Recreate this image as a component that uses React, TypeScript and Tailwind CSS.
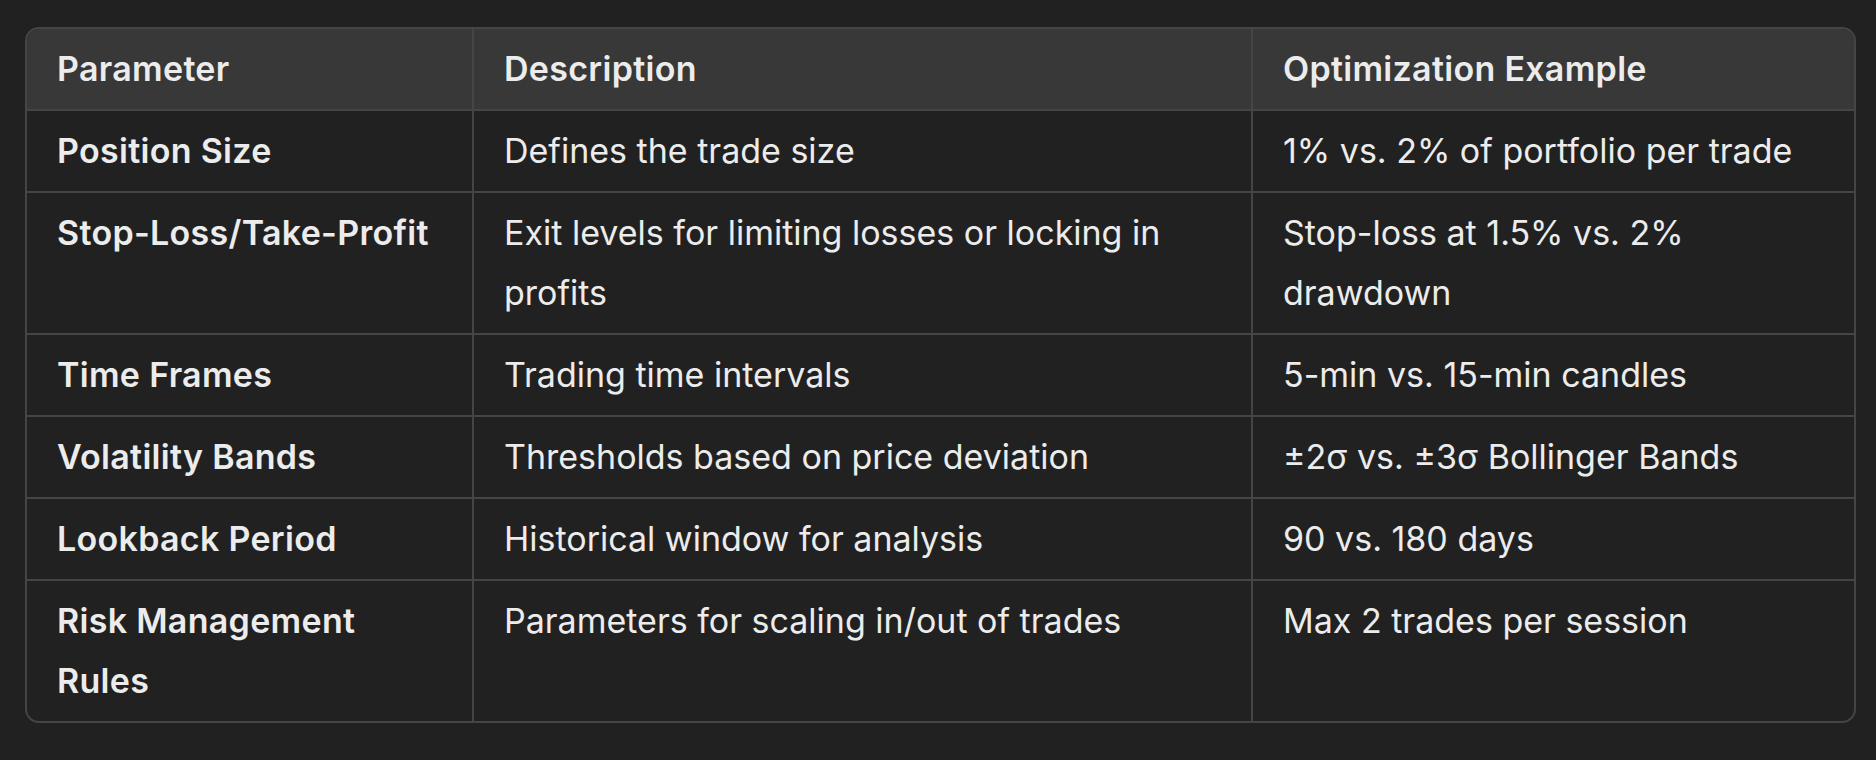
const rows = [
  {
    param: 'Position Size',
    desc: 'Defines the trade size',
    example: '1% vs. 2% of portfolio per trade',
  },
  {
    param: 'Stop-Loss/Take-Profit',
    desc: 'Exit levels for limiting losses or locking in profits',
    example: 'Stop-loss at 1.5% vs. 2% drawdown',
  },
  {
    param: 'Time Frames',
    desc: 'Trading time intervals',
    example: '5-min vs. 15-min candles',
  },
  {
    param: 'Volatility Bands',
    desc: 'Thresholds based on price deviation',
    example: '±2σ vs. ±3σ Bollinger Bands',
  },
  {
    param: 'Lookback Period',
    desc: 'Historical window for analysis',
    example: '90 vs. 180 days',
  },
  {
    param: 'Risk Management Rules',
    desc: 'Parameters for scaling in/out of trades',
    example: 'Max 2 trades per session',
  },
];

export default function App() {
  return (
    <div
      className="min-h-[760px] w-[1876px] bg-[#212121] pt-[27px] pl-[25px] text-[#ececec]"
      style={{ fontFamily: 'Inter, "Noto Sans", sans-serif' }}
    >
      <div className="w-[1831px] overflow-hidden rounded-[14px] border-2 border-[#454545]">
        <table className="w-full table-fixed border-collapse text-[34px] leading-[60px]">
          <colgroup>
            <col className="w-[446px]" />
            <col className="w-[779px]" />
            <col />
          </colgroup>
          <thead>
            <tr className="bg-[#383838]">
              <th className="border-r-2 border-b-2 border-[#454545] px-[30px] py-[10px] text-left font-semibold tracking-[0.3px]">
                Parameter
              </th>
              <th className="border-r-2 border-b-2 border-[#454545] px-[30px] py-[10px] text-left font-semibold tracking-[0.3px]">
                Description
              </th>
              <th className="border-b-2 border-[#454545] px-[30px] py-[10px] text-left font-semibold tracking-[0.3px]">
                Optimization Example
              </th>
            </tr>
          </thead>
          <tbody>
            {rows.map((row, i) => {
              const last = i === rows.length - 1;
              return (
                <tr key={row.param}>
                  <td
                    className={`border-r-2 border-[#454545] px-[30px] py-[10px] align-top font-semibold tracking-[0.3px] ${
                      last ? '' : 'border-b-2'
                    }`}
                  >
                    {row.param}
                  </td>
                  <td
                    className={`border-r-2 border-[#454545] px-[30px] py-[10px] align-top ${
                      last ? '' : 'border-b-2'
                    }`}
                  >
                    {row.desc}
                  </td>
                  <td
                    className={`border-[#454545] px-[30px] py-[10px] align-top ${
                      last ? '' : 'border-b-2'
                    }`}
                  >
                    {row.example}
                  </td>
                </tr>
              );
            })}
          </tbody>
        </table>
      </div>
    </div>
  );
}
